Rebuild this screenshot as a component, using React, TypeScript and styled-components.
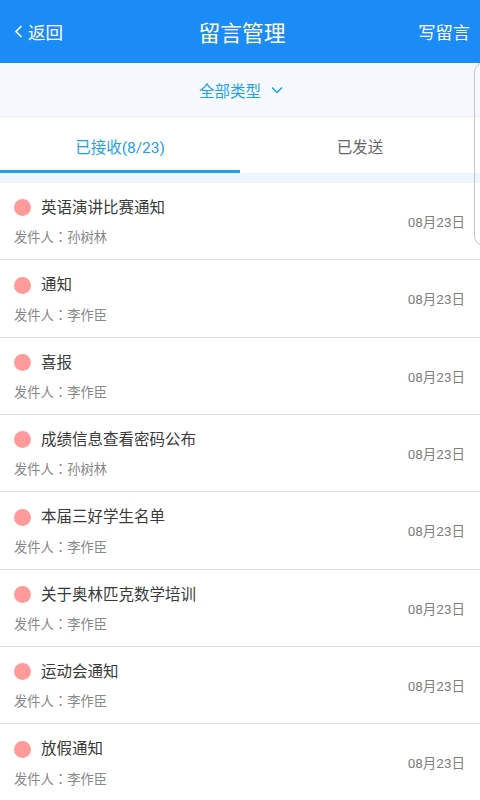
import React, { useState } from 'react';
import styled, { createGlobalStyle } from 'styled-components';

const GlobalStyle = createGlobalStyle`
    html, body {
        margin: 0;
        padding: 0;
        background: #ffffff;
        font-family: Roboto, "Noto Sans CJK SC", "Noto Sans", sans-serif;
    }
    * {
        box-sizing: border-box;
    }
`;

const Page = styled.main`
    position: relative;
    width: 480px;
    height: 800px;
    overflow: hidden;
    background: #ffffff;
`;

const Header = styled.header`
    height: 63px;
    background-color: #1b8bf5;
    display: grid;
    grid-template-columns: 1fr auto 1fr;
    align-items: center;
    padding: 0 10px 0 14px;
    color: #ffffff;
`;

const BackButton = styled.div`
    display: flex;
    align-items: center;
    gap: 5px;
    font-size: 17.5px;
    & > svg {
        width: 9px;
        height: 13px;
    }
`;

const Title = styled.h1`
    margin: 0;
    font-size: 21.8px;
    font-weight: 400;
`;

const WriteButton = styled.div`
    justify-self: end;
    font-size: 17.3px;
`;

const FilterBar = styled.div`
    height: 54px;
    background-color: #f5f9fd;
    border-bottom: 1px solid #e9eef4;
    display: flex;
    align-items: center;
    justify-content: center;
    gap: 10px;
    color: #1e9ff0;
    font-size: 15.5px;
    padding-left: 2px;
    & > svg {
        width: 12px;
        height: 8px;
    }
`;

const Tabs = styled.nav`
    display: flex;
    height: 56px;
`;

const Tab = styled.div<{ $active?: boolean }>`
    flex: 1;
    display: flex;
    align-items: center;
    justify-content: center;
    padding-top: 4px;
    font-size: 15.5px;
    color: ${(p) => (p.$active ? '#1e9ff0' : '#666666')};
    border-bottom: 3px solid ${(p) => (p.$active ? '#1e9ff0' : 'transparent')};
`;

const Strip = styled.div`
    height: 10px;
    background-color: #eef5fd;
`;

const List = styled.ul`
    list-style: none;
    margin: 0;
    padding: 0;
`;

const Row = styled.li`
    height: 77.33px;
    border-bottom: 1.5px solid #d9dee5;
    display: flex;
    align-items: center;
    justify-content: space-between;
    padding: 0 15px 0 14px;
`;

const Info = styled.div`
    display: flex;
    flex-direction: column;
    gap: 10.5px;
    padding-top: 3px;
`;

const TitleLine = styled.div`
    display: flex;
    align-items: center;
    gap: 10px;
    font-size: 15.5px;
    line-height: 20px;
    color: #3a3a3a;
`;

const Dot = styled.span`
    width: 17px;
    height: 17px;
    border-radius: 50%;
    background-color: #ff9b9b;
    flex-shrink: 0;
`;

const Sender = styled.div`
    font-size: 13.3px;
    line-height: 18px;
    color: #888888;
`;

// full-width colon centred in its cell, as on the device
const Colon = styled.span`
    font-family: "Noto Sans CJK TC", sans-serif;
`;

const DateText = styled.span`
    font-size: 13.5px;
    color: #808080;
`;

const DrawerEdge = styled.div`
    position: absolute;
    left: 474px;
    top: 62px;
    width: 24px;
    height: 184px;
    border: 1.5px solid #c4c4c4;
    border-radius: 10px;
    pointer-events: none;
`;

const messages = [
    { title: '英语演讲比赛通知', sender: '孙树林' },
    { title: '通知', sender: '李作臣' },
    { title: '喜报', sender: '李作臣' },
    { title: '成绩信息查看密码公布', sender: '孙树林' },
    { title: '本届三好学生名单', sender: '李作臣' },
    { title: '关于奥林匹克数学培训', sender: '李作臣' },
    { title: '运动会通知', sender: '李作臣' },
    { title: '放假通知', sender: '李作臣' },
];

const App = () => {
    const [tab, setTab] = useState(0);

    return (
        <Page>
            <GlobalStyle />
            <Header>
                <BackButton>
                    <svg viewBox="0 0 9 13" fill="none">
                        <path d="M7.5 1 L2 6.5 L7.5 12" stroke="#ffffff" strokeWidth="1.6" />
                    </svg>
                    返回
                </BackButton>
                <Title>留言管理</Title>
                <WriteButton>写留言</WriteButton>
            </Header>
            <FilterBar>
                全部类型
                <svg viewBox="0 0 12 8" fill="none">
                    <path d="M1 1.5 L6 6.5 L11 1.5" stroke="#1e9ff0" strokeWidth="1.5" />
                </svg>
            </FilterBar>
            <Tabs>
                <Tab $active={tab === 0} onClick={() => setTab(0)}>已接收(8/23)</Tab>
                <Tab $active={tab === 1} onClick={() => setTab(1)}>已发送</Tab>
            </Tabs>
            <Strip />
            <List>
                {messages.map((m, i) => (
                    <Row key={i}>
                        <Info>
                            <TitleLine>
                                <Dot />
                                {m.title}
                            </TitleLine>
                            <Sender>
                                发件人<Colon>：</Colon>{m.sender}
                            </Sender>
                        </Info>
                        <DateText>08月23日</DateText>
                    </Row>
                ))}
            </List>
            <DrawerEdge />
        </Page>
    );
};

export default App;
